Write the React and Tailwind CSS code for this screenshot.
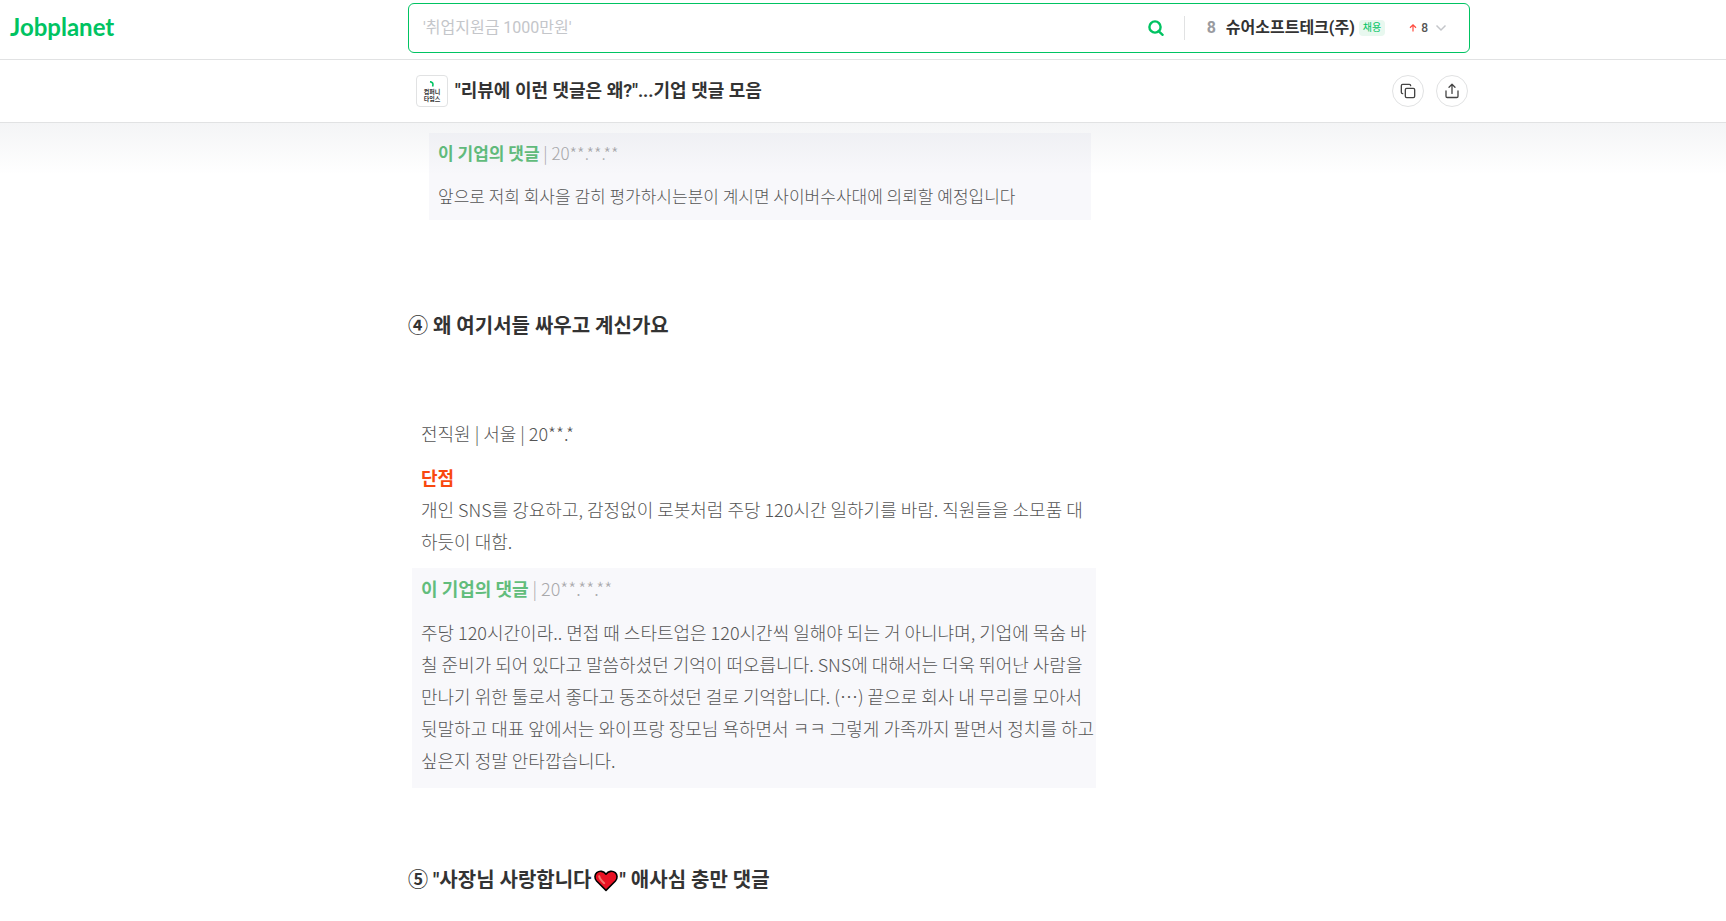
import { Copy } from "lucide-react";

function SearchIcon() {
  return (
    <svg viewBox="0 0 16 16" className="size-4" fill="none" stroke="#00c362" strokeWidth="2.4" aria-hidden="true">
      <circle cx="7" cy="7" r="5.6" />
      <path d="M10.6 11.2 14.6 14.8" strokeLinecap="round" />
    </svg>
  );
}

function ShareIcon() {
  return (
    <svg viewBox="0 0 16 16" className="size-4" fill="none" stroke="#444" strokeWidth="1.3" strokeLinecap="round" strokeLinejoin="round" aria-hidden="true">
      <path d="M2 8v5.2c0 .8.4 1.3 1.2 1.3h9.6c.8 0 1.2-.5 1.2-1.3V8" />
      <path d="M8 10.4V1.4M5 4.2l3-3 3 3" />
    </svg>
  );
}

function HeartIcon() {
  return (
    <svg viewBox="0 0 24 22" className="mx-0.5 inline-block h-[22px] w-6 align-[-5px]" role="img" aria-label="하트">
      <path d="M12 20.4 2.6 11C.2 8.4.6 4.6 2.8 2.7 5.6.4 9.6.9 12 4.2 14.4.9 18.4.4 21.2 2.7c2.2 1.9 2.6 5.7.2 8.3Z" fill="#e81224" stroke="#000" strokeWidth="1.6" strokeLinejoin="round" />
      <path d="M5.2 6.2c.2 2.6 2.2 4.6 5 7" fill="none" stroke="#f4736b" strokeWidth="2" strokeLinecap="round" />
    </svg>
  );
}

function ReplyHeader() {
  return (
    <p className="text-[#a9a9ab]">
      <strong className="font-bold text-[#62bd7c]">이 기업의 댓글</strong> | 20**.**.**
    </p>
  );
}

const replyLines = [
  "주당 120시간이라.. 면접 때 스타트업은 120시간씩 일해야 되는 거 아니냐며, 기업에 목숨 바",
  "칠 준비가 되어 있다고 말씀하셨던 기억이 떠오릅니다. SNS에 대해서는 더욱 뛰어난 사람을",
  "만나기 위한 툴로서 좋다고 동조하셨던 걸로 기억합니다. (⋯) 끝으로 회사 내 무리를 모아서",
  "뒷말하고 대표 앞에서는 와이프랑 장모님 욕하면서 ㅋㅋ 그렇게 가족까지 팔면서 정치를 하고",
  "싶은지 정말 안타깝습니다.",
];

export default function App() {
  return (
    <div className="bg-white font-['Roboto','Noto_Sans_CJK_KR',sans-serif] text-[#333]">
      <div className="sticky top-0">
        <header className="flex h-[60px] items-start border-b border-[#e1e2e3] bg-white pt-[3px]">
          <div className="w-[408px] shrink-0 pt-2 pl-2.5">
            <a href="#" className="font-['Lato',sans-serif] text-2xl font-bold text-[#00c362]">Jobplanet</a>
          </div>
          <form className="flex h-[50px] max-w-[1062px] flex-1 items-center rounded-md border border-[#00c362] pr-[22px] pl-[14px]">
            <input
              type="search"
              aria-label="검색"
              placeholder="'취업지원금 1000만원'"
              className="min-w-0 flex-1 text-base outline-none placeholder:text-[#c4c6ca]"
            />
            <button type="button" aria-label="검색하기" className="mr-5">
              <SearchIcon />
            </button>
            <div className="flex items-center border-l border-[#e1e2e3] pl-[22px]">
              <span className="w-[19px] font-bold text-[#9a9ba0]">8</span>
              <a href="#" className="font-bold">슈어소프트테크(주)</a>
              <span className="ml-1 rounded bg-[#e8f8ef] px-1 text-[10px] leading-4 text-[#00c362]">채용</span>
              <span className="ml-6 flex items-center gap-1 text-xs font-medium text-[#555]">
                <svg viewBox="0 0 8 8" className="size-2" fill="none" stroke="#ff4b3e" strokeWidth="1.2" aria-hidden="true">
                  <path d="M4 7.5V1M1 3.8 4 .9l3 2.9" />
                </svg>
                8
              </span>
              <button type="button" aria-label="인기 검색어 펼치기" className="ml-[7px]">
                <svg viewBox="0 0 12 12" className="size-3" fill="none" stroke="#c4c6ca" strokeWidth="1.5" aria-hidden="true">
                  <path d="m1.5 3.5 4.5 4.5 4.5-4.5" />
                </svg>
              </button>
            </div>
          </form>
        </header>
        <div className="h-[63px] border-b border-[#e1e2e3] bg-white pl-[408px]">
          <div className="flex h-full max-w-[1062px] items-center pr-0.5 pl-2">
            <div className="flex size-8 shrink-0 flex-col items-center justify-center rounded border border-[#e1e2e3] text-[6px] leading-[7px] font-bold">
              <svg viewBox="0 0 6 6" className="mb-px size-1.5" fill="none" stroke="#00c362" strokeWidth="1.6" aria-hidden="true">
                <path d="M1 .6c2.4.4 3.6 1.8 2.6 4.8" />
              </svg>
              <span>컴퍼니</span>
              <span>타임스</span>
            </div>
            <h1 className="ml-[7px] flex-1 text-lg font-bold">"리뷰에 이런 댓글은 왜?"...기업 댓글 모음</h1>
            <div className="flex gap-3">
              <button type="button" aria-label="링크 복사" className="flex size-8 items-center justify-center rounded-full border border-[#e1e2e3]">
                <Copy className="size-4 text-[#444]" strokeWidth={2} />
              </button>
              <button type="button" aria-label="공유" className="flex size-8 items-center justify-center rounded-full border border-[#e1e2e3]">
                <ShareIcon />
              </button>
            </div>
          </div>
        </div>
        <div className="pointer-events-none absolute inset-x-0 top-full h-13 bg-linear-to-b from-[#20304a]/5 to-transparent" />
      </div>

      <main className="pl-[408px]">
        <article className="max-w-[688px]">
          <section className="mt-2.5 mr-[5px] ml-[21px] bg-[#f8f8fb] px-[9px] pt-1 pb-2 font-['Noto_Sans_CJK_KR',sans-serif] text-[17px] leading-8 font-light text-[#555]">
            <ReplyHeader />
            <p className="mt-[11px]">앞으로 저희 회사을 감히 평가하시는분이 계시면 사이버수사대에 의뢰할 예정입니다</p>
          </section>

          <h2 className="mt-[90px] text-xl leading-8 font-bold">④ 왜 여기서들 싸우고 계신가요</h2>

          <section className="mt-[75px] ml-1 font-['Noto_Sans_CJK_KR',sans-serif] text-lg leading-8 font-light whitespace-nowrap text-[#555]">
            <div className="px-[9px]">
              <p>전직원 | 서울 | 20**.*</p>
              <h3 className="mt-3 font-bold text-[#f9480e]">단점</h3>
              <p>
                개인 SNS를 강요하고, 감정없이 로봇처럼 주당 120시간 일하기를 바람. 직원들을 소모품 대<br />
                하듯이 대함.
              </p>
            </div>
            <div className="mt-[11px] bg-[#f8f8fb] px-[9px] pt-1 pb-3">
              <ReplyHeader />
              <p className="mt-3">
                {replyLines.map((line) => (
                  <span key={line} className="block">{line}</span>
                ))}
              </p>
            </div>
          </section>

          <h2 className="mt-19 text-xl leading-8 font-bold">
            ⑤ "사장님 사랑합니다<HeartIcon />" 애사심 충만 댓글
          </h2>
        </article>
      </main>
    </div>
  );
}
